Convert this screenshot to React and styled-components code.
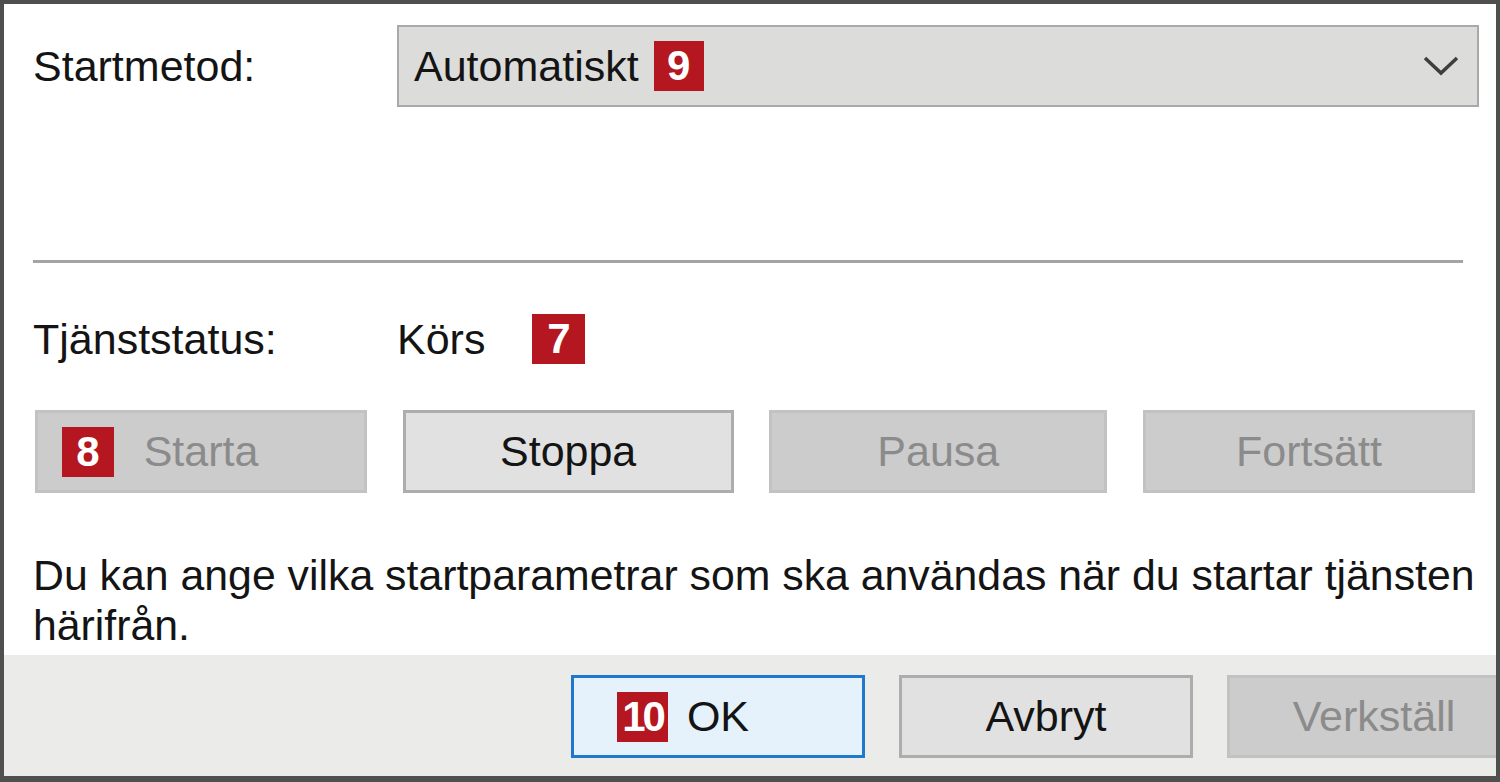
import React from 'react';
import styled, {createGlobalStyle} from 'styled-components';

const GlobalStyle = createGlobalStyle`
body {
  margin: 0;
  background: #ffffff;
}
`;

const Window = styled.div`
  width: 1500px;
  height: 782px;
  box-sizing: border-box;
  border: 4px solid #4f4f4f;
  border-bottom-width: 6px;
  background: #ffffff;
  display: flex;
  flex-direction: column;
  overflow: hidden;
  font-family: 'Liberation Sans', Arial, sans-serif;
  font-size: 43px;
  color: #141414;
`;

const Content = styled.div`
  flex: 1;
  padding: 21px 17px 0 29px;
  display: flex;
  flex-direction: column;
`;

const FieldRow = styled.div`
  display: grid;
  grid-template-columns: 364px 1fr;
  align-items: center;
  margin-top: ${p => p.$top || 0}px;
`;

const Label = styled.span`
  line-height: 50px;
`;

const Combo = styled.div`
  height: 82px;
  box-sizing: border-box;
  background: #dcdcda;
  border: 2px solid #a9a9a9;
  display: flex;
  align-items: center;
  padding: 0 18px 0 15px;
`;

const ComboText = styled.span`
  flex: 1;
  display: flex;
  align-items: center;
  gap: 15px;
`;

const Badge = styled.span`
  display: inline-flex;
  align-items: center;
  justify-content: center;
  width: ${p => p.$w || 50}px;
  height: 50px;
  background: #b4171f;
  color: #ffffff;
  font-weight: bold;
  font-size: 42px;
  letter-spacing: ${p => p.$tight ? '-3px' : '0'};
  line-height: 1;
`;

const Separator = styled.div`
  height: 3px;
  background: #a4a4a4;
  margin: 153px 16px 0 0;
`;

const StatusValue = styled.span`
  display: flex;
  align-items: center;
  gap: 47px;
  line-height: 50px;
`;

const ButtonRow = styled.div`
  display: grid;
  grid-template-columns: 332px 331px 338px 332px;
  justify-content: space-between;
  margin: 46px 4px 0 2px;
`;

const Button = styled.div`
  position: relative;
  height: 83px;
  box-sizing: border-box;
  display: flex;
  align-items: center;
  justify-content: center;
  flex-shrink: 0;
  width: ${p => p.$w ? p.$w + 'px' : 'auto'};
  background: ${p => p.$primary ? '#e5f1fb' : p.$disabled ? '#cccccc' : '#e1e1e1'};
  border: 3px solid ${p => p.$primary ? '#1f78cc' : p.$disabled ? '#c2c2c2' : '#adadad'};
  color: ${p => p.$disabled ? '#8b8b8b' : '#141414'};
`;

const ButtonBadge = styled.span`
  position: absolute;
  left: ${p => p.$left}px;
  top: 50%;
  transform: translateY(-50%);
  display: flex;
`;

const Description = styled.p`
  margin: 57px 0 0 0;
  width: 1462px;
  line-height: 50px;
  font-size: 42.8px;
`;

const Footer = styled.div`
  height: 121px;
  box-sizing: border-box;
  background: #ebebe9;
  display: flex;
  gap: 34px;
  padding: 20px 0 0 567px;
  overflow: hidden;
`;

const Chevron = () => (
  <svg width="36" height="20" viewBox="0 0 36 20">
    <path d="M2 2 L18 17 L34 2" fill="none" stroke="#3e3e3e" strokeWidth="3.5" />
  </svg>
);

export default function App() {
  return (
    <>
      <GlobalStyle />
      <Window>
        <Content>
          <FieldRow>
            <Label>Startmetod:</Label>
            <Combo>
              <ComboText>
                Automatiskt
                <Badge>9</Badge>
              </ComboText>
              <Chevron />
            </Combo>
          </FieldRow>

          <Separator />

          <FieldRow $top={51}>
            <Label>Tjänststatus:</Label>
            <StatusValue>
              Körs
              <Badge $w={53}>7</Badge>
            </StatusValue>
          </FieldRow>

          <ButtonRow>
            <Button $disabled>
              <ButtonBadge $left={24}><Badge $w={52}>8</Badge></ButtonBadge>
              Starta
            </Button>
            <Button>Stoppa</Button>
            <Button $disabled>Pausa</Button>
            <Button $disabled>Fortsätt</Button>
          </ButtonRow>

          <Description>
            Du kan ange vilka startparametrar som ska användas när du startar tjänsten härifrån.
          </Description>
        </Content>

        <Footer>
          <Button $primary $w={294}>
            <ButtonBadge $left={43}><Badge $w={51} $tight>10</Badge></ButtonBadge>
            OK
          </Button>
          <Button $w={294}>Avbryt</Button>
          <Button $disabled $w={294}>Verkställ</Button>
        </Footer>
      </Window>
    </>
  );
}
